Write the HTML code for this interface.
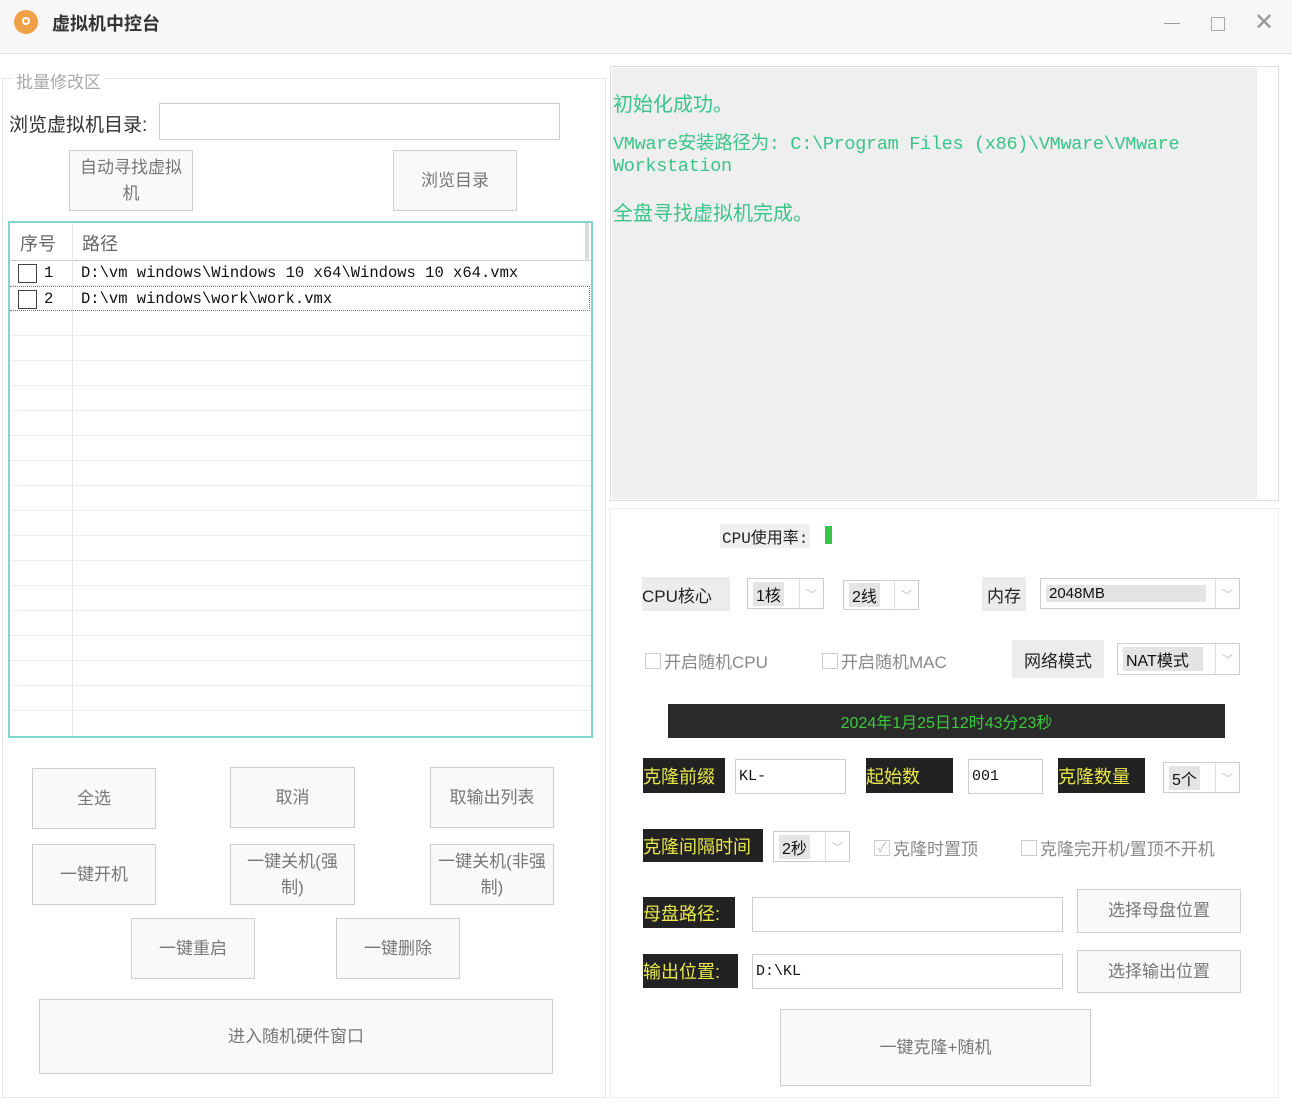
<!DOCTYPE html>
<html><head><meta charset="utf-8"><style>
*{box-sizing:border-box;margin:0;padding:0}
body{width:1292px;height:1112px;background:#fff;position:relative;overflow:hidden;font-family:"Liberation Sans","Noto Sans CJK SC",sans-serif;color:#333}
.a{position:absolute}
.btn{position:absolute;border:1px solid #cfcfcf;background:#f9f9f9;color:#777;font-size:17px;display:flex;align-items:center;justify-content:center;text-align:center;line-height:26px}
.inp{position:absolute;border:1px solid #cdcdcd;background:#fff;font-family:"Liberation Mono","Noto Sans CJK SC",monospace;font-size:15px;padding-left:3px;display:flex;align-items:center;color:#111}
.lbl{position:absolute;background:#222;color:#e8e84a;font-size:18px;display:flex;align-items:center;white-space:nowrap}
.cb{position:absolute;border:1px solid #ccc;background:#fff;color:#888;font-size:13px;display:flex;align-items:center;padding-left:5px}
.cb i{position:absolute;right:0;top:0;bottom:0;width:24px;border-left:1px solid #ddd;font-style:normal;color:#bbb;font-size:11px;display:flex;align-items:center;justify-content:center}
.cb span{background:#e4e4e4;color:#111;padding:0 3px;font-size:16px}
.gl{position:absolute;background:#ececec;color:#222;font-size:17px;display:flex;align-items:center;justify-content:center}
.chk{position:absolute;font-size:17px;color:#888;display:flex;align-items:center;white-space:nowrap}
.chk b{display:inline-block;width:16px;height:16px;border:1px solid #ccc;margin-right:3px;font-weight:normal;font-size:13px;line-height:14px;text-align:center;color:#bbb}
.row{position:absolute;left:10px;width:580px;height:25px;border-bottom:1px solid #eee;font-family:"Liberation Mono",monospace;font-size:15.5px;color:#111}
</style></head><body>
<div class="a" style="left:0;top:0;width:1292px;height:54px;background:#f7f7f7;border-bottom:1px solid #e2e2e2"></div>
<div class="a" style="left:14px;top:10px;width:24px;height:24px;border-radius:50%;background:#f0a048"></div>
<div class="a" style="left:22px;top:17px;width:8px;height:8px;border-radius:50%;border:2px solid #fff"></div>
<div class="a" style="left:52px;top:10px;font-size:18px;font-weight:bold;color:#333">虚拟机中控台</div>
<div class="a" style="left:1164px;top:23px;width:16px;height:1px;background:#999"></div>
<div class="a" style="left:1211px;top:17px;width:14px;height:14px;border:1px solid #aaa"></div>
<div class="a" style="left:1254px;top:8px;font-size:24px;color:#999;font-weight:300">✕</div>

<div class="a" style="left:2px;top:78px;width:604px;height:1020px;border:1px solid #e4e4e4"></div>
<div class="a" style="left:12px;top:68px;background:#fff;padding:0 4px;font-size:17px;color:#aaa">批量修改区</div>
<div class="a" style="left:9px;top:110px;font-size:19px;color:#333">浏览虚拟机目录:</div>
<div class="inp" style="left:159px;top:103px;width:401px;height:37px"></div>
<div class="btn" style="left:69px;top:150px;width:124px;height:61px">自动寻找虚拟<br>机</div>
<div class="btn" style="left:393px;top:150px;width:124px;height:61px">浏览目录</div>

<div class="a" style="left:8px;top:221px;width:585px;height:517px;border:2px solid #7fd6cc;background:#fff"></div>
<div class="a" style="left:10px;top:223px;width:581px;height:38px;border-bottom:1px solid #ccc;background:#fff"></div>
<div class="a" style="left:72px;top:223px;width:1px;height:513px;background:#e8e8e8"></div>
<div class="a" style="left:585px;top:223px;width:4px;height:38px;background:#ddd"></div>
<div class="a" style="left:20px;top:230px;font-size:18px;color:#666">序号</div>
<div class="a" style="left:82px;top:230px;font-size:18px;color:#666">路径</div>
<div class="row" style="top:261px"><b class="a" style="left:8px;top:3px;width:19px;height:19px;border:1px solid #444"></b><span class="a" style="left:34px;top:3px">1</span><span class="a" style="left:71px;top:3px">D:\vm windows\Windows 10 x64\Windows 10 x64.vmx</span></div>
<div class="row" style="top:286px;border:1px dotted #777;border-left:none"><b class="a" style="left:8px;top:3px;width:19px;height:19px;border:1px solid #444"></b><span class="a" style="left:34px;top:3px">2</span><span class="a" style="left:71px;top:3px">D:\vm windows\work\work.vmx</span></div>
<div class="a" style="left:10px;top:311px;width:580px;height:424px;background:repeating-linear-gradient(#fff 0 24px,#eee 24px 25px)"></div>
<div class="a" style="left:72px;top:311px;width:1px;height:424px;background:#e8e8e8"></div>

<div class="btn" style="left:32px;top:768px;width:124px;height:61px">全选</div>
<div class="btn" style="left:230px;top:767px;width:125px;height:61px">取消</div>
<div class="btn" style="left:430px;top:767px;width:124px;height:61px">取输出列表</div>
<div class="btn" style="left:32px;top:844px;width:124px;height:61px">一键开机</div>
<div class="btn" style="left:230px;top:844px;width:125px;height:61px">一键关机(强<br>制)</div>
<div class="btn" style="left:430px;top:844px;width:124px;height:61px">一键关机(非强<br>制)</div>
<div class="btn" style="left:131px;top:918px;width:124px;height:61px">一键重启</div>
<div class="btn" style="left:336px;top:918px;width:124px;height:61px">一键删除</div>
<div class="btn" style="left:39px;top:999px;width:514px;height:75px">进入随机硬件窗口</div>

<div class="a" style="left:610px;top:66px;width:669px;height:435px;border:1px solid #ddd;background:#fff"></div>
<div class="a" style="left:612px;top:68px;width:645px;height:431px;background:#efefef"></div>
<div class="a" style="left:613px;top:88px;font-size:20px;color:#3ac48a">初始化成功。</div>
<div class="a" style="left:613px;top:134px;font-size:18.5px;color:#3ac48a;font-family:'Liberation Mono','Noto Sans CJK SC',monospace;line-height:22px;letter-spacing:-0.3px">VMware安装路径为: C:\Program Files (x86)\VMware\VMware<br>Workstation</div>
<div class="a" style="left:613px;top:197px;font-size:20px;color:#3ac48a">全盘寻找虚拟机完成。</div>

<div class="a" style="left:610px;top:508px;width:669px;height:590px;border:1px solid #eee"></div>
<div class="a" style="left:720px;top:524px;font-size:16px;font-family:'Liberation Mono','Noto Sans CJK SC',monospace;color:#222;background:#f0f0f0;padding:0 2px">CPU使用率:</div>
<div class="a" style="left:825px;top:526px;width:7px;height:18px;background:#3cc44a"></div>

<div class="gl" style="left:642px;top:577px;width:88px;height:34px;justify-content:flex-start">CPU核心</div>
<div class="cb" style="left:747px;top:578px;width:77px;height:31px"><span>1核</span><i>﹀</i></div>
<div class="cb" style="left:843px;top:580px;width:76px;height:30px"><span>2线</span><i>﹀</i></div>
<div class="gl" style="left:982px;top:577px;width:44px;height:34px">内存</div>
<div class="cb" style="left:1040px;top:578px;width:200px;height:31px"><span style="width:160px;font-size:15px">2048MB</span><i>﹀</i></div>

<div class="chk" style="left:645px;top:648px"><b></b>开启随机CPU</div>
<div class="chk" style="left:822px;top:648px"><b></b>开启随机MAC</div>
<div class="gl" style="left:1012px;top:640px;width:92px;height:38px">网络模式</div>
<div class="cb" style="left:1117px;top:643px;width:123px;height:32px"><span style="width:80px">NAT模式</span><i>﹀</i></div>

<div class="a" style="left:668px;top:704px;width:557px;height:34px;background:#2a2a2a;color:#3ec83e;font-size:16px;display:flex;align-items:center;justify-content:center">2024年1月25日12时43分23秒</div>

<div class="lbl" style="left:643px;top:758px;width:82px;height:35px">克隆前缀</div>
<div class="inp" style="left:735px;top:759px;width:111px;height:35px">KL-</div>
<div class="lbl" style="left:866px;top:758px;width:87px;height:35px">起始数</div>
<div class="inp" style="left:968px;top:759px;width:75px;height:35px">001</div>
<div class="lbl" style="left:1058px;top:758px;width:87px;height:35px">克隆数量</div>
<div class="cb" style="left:1163px;top:762px;width:77px;height:31px"><span>5个</span><i>﹀</i></div>

<div class="lbl" style="left:643px;top:829px;width:120px;height:33px">克隆间隔时间</div>
<div class="cb" style="left:773px;top:831px;width:77px;height:31px"><span>2秒</span><i>﹀</i></div>
<div class="chk" style="left:874px;top:835px"><b>✓</b>克隆时置顶</div>
<div class="chk" style="left:1021px;top:835px"><b></b>克隆完开机/置顶不开机</div>

<div class="lbl" style="left:643px;top:897px;width:92px;height:31px">母盘路径:</div>
<div class="inp" style="left:752px;top:897px;width:311px;height:35px"></div>
<div class="btn" style="left:1077px;top:889px;width:164px;height:44px">选择母盘位置</div>
<div class="lbl" style="left:643px;top:954px;width:95px;height:34px">输出位置:</div>
<div class="inp" style="left:752px;top:954px;width:311px;height:35px">D:\KL</div>
<div class="btn" style="left:1077px;top:950px;width:164px;height:43px">选择输出位置</div>
<div class="btn" style="left:780px;top:1009px;width:311px;height:77px">一键克隆+随机</div>
</body></html>
